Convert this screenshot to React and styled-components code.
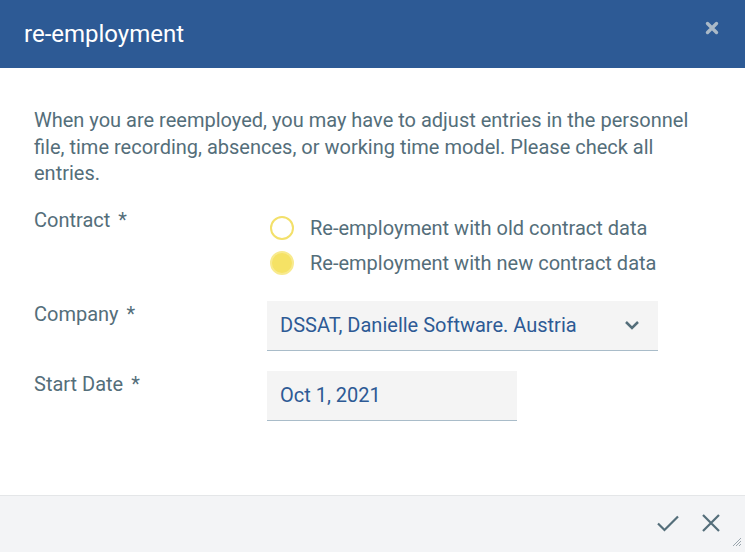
import React, { useState } from "react";
import styled, { createGlobalStyle } from "styled-components";

const GlobalStyle = createGlobalStyle`
  html, body {
    margin: 0;
    padding: 0;
    background: #fff;
    font-family: Roboto, "Liberation Sans", sans-serif;
  }
`;

const Dialog = styled.div`
  position: relative;
  width: 745px;
  height: 552px;
  display: flex;
  flex-direction: column;
  background: #fff;
  overflow: hidden;
`;

const Header = styled.div`
  height: 68px;
  flex: none;
  display: flex;
  align-items: center;
  justify-content: space-between;
  padding: 0 24px;
  background: #2d5a95;
  box-sizing: border-box;
`;

const Title = styled.h1`
  margin: 0;
  font-size: 24px;
  font-weight: 400;
  color: #fff;
`;

const HeaderClose = styled.button`
  border: 0;
  padding: 0;
  background: none;
  display: flex;
  margin-top: -12px;
  margin-right: 2px;
  cursor: pointer;
`;

const Body = styled.div`
  flex: 1;
  padding: 39px 34px 0;
  color: #546e7a;
  font-size: 20px;
`;

const Intro = styled.p`
  margin: 0;
  line-height: 26.5px;
`;

const Form = styled.div`
  margin-top: 20px;
  display: grid;
  grid-template-columns: 233px 1fr;
  row-gap: 20px;
`;

const Label = styled.div`
  line-height: 27px;
  span {
    margin-left: 8px;
  }
`;

const RadioGroup = styled.div`
  padding-top: 4px;
  display: flex;
  flex-direction: column;
`;

const RadioOption = styled.label`
  height: 35px;
  display: flex;
  align-items: center;
  gap: 16px;
  padding-left: 3px;
  cursor: pointer;
`;

const RadioDot = styled.span`
  width: 24px;
  height: 24px;
  box-sizing: border-box;
  border-radius: 50%;
  border: 2px solid ${({ $checked }) => ($checked ? "#f8ea8e" : "#f3e06a")};
  background: ${({ $checked }) => ($checked ? "#f5e265" : "#fff")};
`;

const Field = styled.div`
  width: ${({ $width }) => $width}px;
  height: 50px;
  box-sizing: border-box;
  display: flex;
  align-items: center;
  justify-content: space-between;
  padding: 0 18px 0 13px;
  background: #f4f4f4;
  border-bottom: 1.5px solid #a9bcc9;
  color: #2d5a95;
`;

const Footer = styled.div`
  height: 57px;
  flex: none;
  box-sizing: border-box;
  border-top: 1px solid #e4e6e8;
  background: #f3f4f6;
  display: flex;
  align-items: center;
  justify-content: flex-end;
  gap: 23px;
  padding: 0 25px 2px 0;
`;

const IconButton = styled.button`
  border: 0;
  padding: 0;
  background: none;
  display: flex;
  cursor: pointer;
`;

const Grip = styled.svg`
  position: absolute;
  right: 3px;
  bottom: 5px;
`;

const Chevron = () => (
  <svg width="16" height="10" viewBox="0 0 16 10">
    <path d="M2 2l6 6 6-6" fill="none" stroke="#546e7a" strokeWidth="2.5" />
  </svg>
);

export default function App() {
  const [choice, setChoice] = useState("new");
  const options = [
    { id: "old", text: "Re-employment with old contract data" },
    { id: "new", text: "Re-employment with new contract data" },
  ];

  return (
    <>
      <GlobalStyle />
      <Dialog>
        <Header>
          <Title>re-employment</Title>
          <HeaderClose aria-label="close">
            <svg width="14" height="14" viewBox="0 0 14 14">
              <path d="M2.5 2.5l9 9M11.5 2.5l-9 9" stroke="#aab9c7" strokeWidth="3.4" strokeLinecap="round" />
            </svg>
          </HeaderClose>
        </Header>
        <Body>
          <Intro>
            When you are reemployed, you may have to adjust entries in the personnel file,
            time recording, absences, or working time model. Please check all entries.
          </Intro>
          <Form>
            <Label>
              Contract<span>*</span>
            </Label>
            <RadioGroup>
              {options.map((o) => (
                <RadioOption key={o.id} onClick={() => setChoice(o.id)}>
                  <RadioDot $checked={choice === o.id} />
                  {o.text}
                </RadioOption>
              ))}
            </RadioGroup>

            <Label>
              Company<span>*</span>
            </Label>
            <Field $width={391}>
              DSSAT, Danielle Software. Austria
              <Chevron />
            </Field>

            <Label>
              Start Date<span>*</span>
            </Label>
            <Field $width={250}>Oct 1, 2021</Field>
          </Form>
        </Body>
        <Footer>
          <IconButton aria-label="confirm">
            <svg width="22" height="17" viewBox="0 0 22 17">
              <path d="M1 8.5l6.5 6.5L21 1.5" fill="none" stroke="#546e7a" strokeWidth="2.2" />
            </svg>
          </IconButton>
          <IconButton aria-label="cancel">
            <svg width="18" height="18" viewBox="0 0 18 18">
              <path d="M1 1l16 16M17 1L1 17" fill="none" stroke="#546e7a" strokeWidth="2.2" />
            </svg>
          </IconButton>
        </Footer>
        <Grip width="12" height="10" viewBox="0 0 12 10">
          <path d="M11 1L3 9M11 4L6 9M11 7L9 9" stroke="#9aa5ad" strokeWidth="1" />
        </Grip>
      </Dialog>
    </>
  );
}
